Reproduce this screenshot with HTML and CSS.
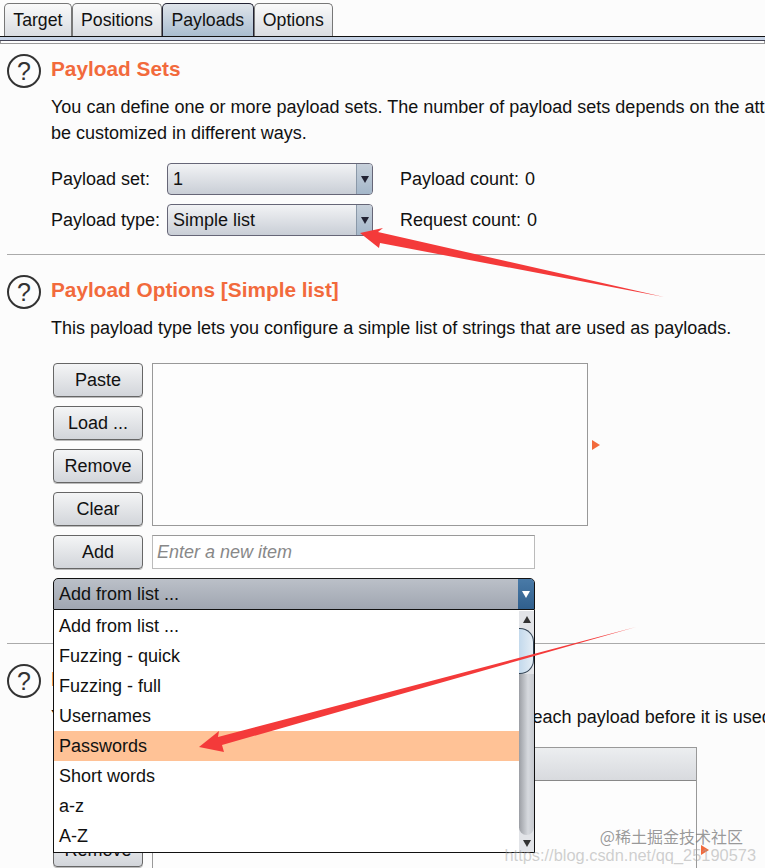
FILE: index.html
```html
<!DOCTYPE html>
<html lang="en">
<head>
    <meta charset="UTF-8">
    <meta name="viewport" content="width=device-width, initial-scale=1.0">
    <title>Intruder - Payloads</title>
    <link rel="stylesheet" href="styles.css">
</head>
<body>
    <div class="tabs">
        <div class="tab">Target</div>
        <div class="tab">Positions</div>
        <div class="tab active">Payloads</div>
        <div class="tab">Options</div>
    </div>
    <div class="tab-rule"></div>

    <div class="section">
        <div class="help">?</div>
        <div class="body">
            <h2>Payload Sets</h2>
            <p class="desc">You can define one or more payload sets. The number of payload sets depends on the attack type defined in the Positions tab.<br>be customized in different ways.</p>
            <div class="set-rows">
                <div class="set-row">
                    <span class="set-label">Payload set:</span>
                    <div class="select"><span>1</span><i class="select-arrow"></i></div>
                    <span class="count-label">Payload count:</span><span>0</span>
                </div>
                <div class="set-row">
                    <span class="set-label">Payload type:</span>
                    <div class="select"><span>Simple list</span><i class="select-arrow"></i></div>
                    <span class="count-label">Request count:</span><span>0</span>
                </div>
            </div>
        </div>
    </div>

    <div class="section section-options">
        <div class="help">?</div>
        <div class="body">
            <h2>Payload Options [Simple list]</h2>
            <p class="desc">This payload type lets you configure a simple list of strings that are used as payloads.</p>
            <div class="editor">
                <div class="list-row">
                    <div class="btn-stack">
                        <div class="btn">Paste</div>
                        <div class="btn">Load ...</div>
                        <div class="btn">Remove</div>
                        <div class="btn">Clear</div>
                    </div>
                    <div class="listbox"></div>
                    <i class="collapse"></i>
                </div>
                <div class="add-row">
                    <div class="btn">Add</div>
                    <div class="new-item">Enter a new item</div>
                </div>
                <div class="combo">
                    <div class="combo-head"><span>Add from list ...</span><i class="combo-arrow"></i></div>
                    <div class="popup">
                        <div class="popup-list">
                            <div class="popup-item">Add from list ...</div>
                            <div class="popup-item">Fuzzing - quick</div>
                            <div class="popup-item">Fuzzing - full</div>
                            <div class="popup-item">Usernames</div>
                            <div class="popup-item selected">Passwords</div>
                            <div class="popup-item">Short words</div>
                            <div class="popup-item">a-z</div>
                            <div class="popup-item">A-Z</div>
                        </div>
                        <div class="scrollbar">
                            <i class="scroll-up"></i>
                            <div class="scroll-thumb"></div>
                            <div class="scroll-track"></div>
                            <i class="scroll-down"></i>
                        </div>
                    </div>
                </div>
            </div>
        </div>
    </div>

    <div class="section section-last">
        <div class="help">?</div>
        <div class="body">
            <h2>Payload Processing</h2>
            <p class="desc">You can define rules to perform various processing tasks on each payload before it is used.</p>
            <div class="list-row rules">
                <div class="btn-stack">
                    <div class="btn">Add</div>
                    <div class="btn">Edit</div>
                    <div class="btn">Remove</div>
                </div>
                <div class="rules-table">
                    <div class="rules-head"></div>
                </div>
                <i class="collapse"></i>
            </div>
        </div>
    </div>

    <svg class="arrows" width="765" height="868" viewBox="0 0 765 868">
        <polygon points="664,297 380,243 379,248 360,233 383,228 378,232" />
        <polygon points="636,627 222,745 224,752 199,747 219,731 218,737" />
    </svg>

    <div class="watermark">
        <div class="wm-cn">@稀土掘金技术社区</div>
        <div class="wm-url">https://blog.csdn.net/qq_25190573</div>
    </div>
</body>
</html>
```

FILE: styles.css
```css
html, body {
    margin: 0;
    height: 868px;
    overflow: hidden;
}
body {
    position: relative;
    background: #fcfcfc;
    font-family: "Liberation Sans", Arial, sans-serif;
    font-size: 18px;
    color: #111;
}
.tabs {
    display: flex;
    padding: 3px 0 0 4px;
    height: 33px;
}
.tab {
    box-sizing: border-box;
    height: 33px;
    padding: 0 8.3px;
    font-size: 17.7px;
    line-height: 33px;
    border: 1px solid #777;
    border-bottom: none;
    border-radius: 5px 5px 0 0;
    background: linear-gradient(#fafafa, #d9dce1);
}
.tab.active {
    background: linear-gradient(#dfe4ea, #a9bdd0);
    border-color: #223;
}
.tab-rule {
    height: 3px;
    margin-bottom: 3px;
    border-top: 1px solid #111;
    border-bottom: 1px solid #445;
    background: #c6d3e6;
    box-shadow: 0 3px 0 -1px #fcfcfc, 0 3px 0 0 #999;
}
.section {
    display: flex;
    margin-left: 7px;
    padding-top: 10px;
    padding-bottom: 18px;
    border-bottom: 1px solid #aaa;
}
.section-options {
    padding-top: 20px;
    padding-bottom: 33px;
}
.section-last {
    padding-top: 20px;
    border-bottom: none;
}
.help {
    box-sizing: border-box;
    flex: none;
    width: 34px;
    height: 34px;
    margin-right: 10px;
    border: 2px solid #333;
    border-radius: 50%;
    color: #333;
    font-size: 25px;
    line-height: 30px;
    text-align: center;
}
.body {
    min-width: 0;
    flex: 1;
}
h2 {
    margin: 0;
    font-size: 20.8px;
    line-height: 30px;
    color: #f26a3c;
}
.desc {
    margin: 10px 0 0;
    line-height: 26px;
    white-space: nowrap;
}
.set-rows {
    margin-top: 17px;
    display: flex;
    flex-direction: column;
    gap: 9px;
}
.set-row {
    display: flex;
    align-items: center;
    height: 32px;
}
.set-label {
    width: 116px;
}
.select {
    box-sizing: border-box;
    display: flex;
    align-items: center;
    justify-content: space-between;
    width: 206px;
    height: 32px;
    padding-left: 5px;
    border: 1px solid #667;
    border-radius: 4px;
    background: linear-gradient(#f2f3f5, #c9ced6);
    overflow: hidden;
}
.select-arrow {
    display: flex;
    align-items: center;
    justify-content: center;
    width: 15px;
    height: 32px;
    background: linear-gradient(#c8d1db, #a3b6c9);
    border-left: 1px solid #8a98a8;
}
.select-arrow::after {
    content: "";
    border-left: 4px solid transparent;
    border-right: 4px solid transparent;
    border-top: 7px solid #223;
}
.count-label {
    margin-left: 27px;
    margin-right: 6px;
}
.editor {
    margin: 22px 0 0 2px;
    width: 482px;
}
.list-row {
    display: flex;
    align-items: center;
    gap: 9px;
}
.list-row > .btn-stack {
    align-self: flex-start;
}
.btn-stack {
    display: flex;
    flex-direction: column;
    gap: 9px;
}
.btn {
    box-sizing: border-box;
    flex: none;
    width: 90px;
    height: 34px;
    line-height: 32px;
    text-align: center;
    border: 1px solid #666;
    border-radius: 4px;
    background: linear-gradient(#f4f5f6, #d2d5da);
    box-shadow: 0 1px 0 #bbb;
}
.listbox {
    box-sizing: border-box;
    flex: none;
    width: 436px;
    align-self: stretch;
    border: 1px solid #999;
    background: #fdfdfd;
}
.collapse {
    flex: none;
    margin-left: -5px;
    border-top: 5px solid transparent;
    border-bottom: 5px solid transparent;
    border-left: 8px solid #f26a3c;
}
.add-row {
    display: flex;
    gap: 9px;
    margin-top: 9px;
}
.new-item {
    box-sizing: border-box;
    width: 383px;
    height: 34px;
    padding-left: 4px;
    line-height: 32px;
    font-style: italic;
    color: #888;
    border: 1px solid #bbb;
    border-top-color: #999;
    background: #fff;
}
.combo {
    position: relative;
    margin-top: 9px;
}
.combo-head {
    box-sizing: border-box;
    display: flex;
    align-items: center;
    justify-content: space-between;
    height: 32px;
    padding-left: 5px;
    border: 1px solid #111;
    border-radius: 5px 5px 0 0;
    background: linear-gradient(#bbc0c8, #a0a6b1);
    overflow: hidden;
}
.combo-arrow {
    display: flex;
    align-items: center;
    justify-content: center;
    width: 16px;
    height: 32px;
    background: linear-gradient(#4a7ba8, #2f5e8c);
}
.combo-arrow::after {
    content: "";
    border-left: 4px solid transparent;
    border-right: 4px solid transparent;
    border-top: 7px solid #fff;
}
.popup {
    position: absolute;
    top: 32px;
    left: 0;
    z-index: 2;
    box-sizing: border-box;
    display: flex;
    width: 482px;
    height: 243px;
    padding-top: 1px;
    border: 1px solid #111;
    border-top: none;
    background: #fff;
}
.popup-list {
    flex: 1;
}
.popup-item {
    height: 30px;
    padding-left: 5px;
    line-height: 30px;
}
.popup-item.selected {
    background: #ffc296;
}
.scrollbar {
    display: flex;
    flex-direction: column;
    align-items: center;
    flex: none;
    width: 15px;
    background: #e2e4e8;
}
.scroll-up, .scroll-down {
    flex: none;
    margin: 5px 0;
    border-left: 4px solid transparent;
    border-right: 4px solid transparent;
}
.scroll-up {
    border-bottom: 7px solid #333;
}
.scroll-down {
    border-top: 7px solid #333;
}
.scroll-thumb {
    box-sizing: border-box;
    flex: none;
    width: 100%;
    height: 46px;
    border: 1px solid #345;
    border-left: none;
    border-radius: 0 14px 14px 0;
    background: linear-gradient(90deg, #c3d9ec, #e4edf5);
}
.scroll-track {
    flex: 1;
    width: 100%;
    border-radius: 0 0 8px 8px;
    background: linear-gradient(90deg, #9b9ea4, #d6d9de 60%, #c6c9cf);
}
.rules {
    margin: 17px 0 0 2px;
}
.rules-table {
    box-sizing: border-box;
    flex: none;
    width: 545px;
    height: 206px;
    border: 1px solid #999;
    background: #fdfdfd;
}
.rules-head {
    height: 32px;
    border-bottom: 1px solid #888;
    background: linear-gradient(#eceef0, #d8dade);
}
.arrows {
    position: absolute;
    top: 0;
    left: 0;
    z-index: 3;
    pointer-events: none;
}
.arrows polygon {
    fill: #f43a3a;
}
.watermark {
    position: absolute;
    top: 826px;
    left: 500px;
    width: 265px;
    z-index: 4;
    text-align: right;
    pointer-events: none;
}
.wm-cn {
    margin-right: 22px;
    font-family: "Noto Sans CJK SC", "Liberation Sans", sans-serif;
    font-size: 16px;
    line-height: 20px;
    color: rgba(120, 120, 120, 0.75);
}
.wm-url {
    margin-right: 9px;
    font-size: 16.4px;
    line-height: 18px;
    color: rgba(160, 160, 160, 0.5);
}
```
